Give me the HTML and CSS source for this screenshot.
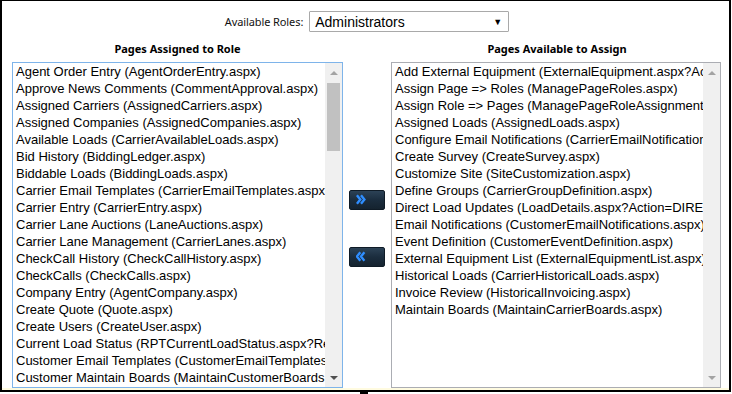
FILE: index.html
```html
<!DOCTYPE html>
<html>
<head>
<meta charset="utf-8">
<link rel="stylesheet" href="styles.css">
</head>
<body>
<div class="frame">
  <div class="roles">
    <label class="roles-label">Available Roles:</label>
    <div class="select">
      <span class="select-text">Administrators</span>
      <span class="select-arrow">&#9660;</span>
    </div>
  </div>
  <div class="columns">
    <div class="col col-left">
      <div class="heading">Pages Assigned to Role</div>
      <div class="listbox listbox-focus">
        <div class="items">
          <div class="item">Agent Order Entry (AgentOrderEntry.aspx)</div>
          <div class="item">Approve News Comments (CommentApproval.aspx)</div>
          <div class="item">Assigned Carriers (AssignedCarriers.aspx)</div>
          <div class="item">Assigned Companies (AssignedCompanies.aspx)</div>
          <div class="item">Available Loads (CarrierAvailableLoads.aspx)</div>
          <div class="item">Bid History (BiddingLedger.aspx)</div>
          <div class="item">Biddable Loads (BiddingLoads.aspx)</div>
          <div class="item">Carrier Email Templates (CarrierEmailTemplates.aspx)</div>
          <div class="item">Carrier Entry (CarrierEntry.aspx)</div>
          <div class="item">Carrier Lane Auctions (LaneAuctions.aspx)</div>
          <div class="item">Carrier Lane Management (CarrierLanes.aspx)</div>
          <div class="item">CheckCall History (CheckCallHistory.aspx)</div>
          <div class="item">CheckCalls (CheckCalls.aspx)</div>
          <div class="item">Company Entry (AgentCompany.aspx)</div>
          <div class="item">Create Quote (Quote.aspx)</div>
          <div class="item">Create Users (CreateUser.aspx)</div>
          <div class="item">Current Load Status (RPTCurrentLoadStatus.aspx?Report=Current)</div>
          <div class="item">Customer Email Templates (CustomerEmailTemplates.aspx)</div>
          <div class="item">Customer Maintain Boards (MaintainCustomerBoards.aspx)</div>
        </div>
        <div class="scrollbar">
          <span class="arrow-up"></span>
          <div class="thumb"></div>
          <span class="arrow-down"></span>
        </div>
      </div>
    </div>
    <div class="mid">
      <button class="move-btn" type="button" aria-label="Add">
        <svg width="10" height="11" viewBox="0 0 10 11"><path d="M0.9 1.3 L4.3 5.5 L0.9 9.7 M5 1.3 L8.4 5.5 L5 9.7" fill="none" stroke="#2f8eff" stroke-width="2.4"/></svg>
      </button>
      <button class="move-btn" type="button" aria-label="Remove">
        <svg width="10" height="11" viewBox="0 0 10 11"><path d="M4.3 1.3 L0.9 5.5 L4.3 9.7 M8.4 1.3 L5 5.5 L8.4 9.7" fill="none" stroke="#2f8eff" stroke-width="2.4"/></svg>
      </button>
    </div>
    <div class="col col-right">
      <div class="heading">Pages Available to Assign</div>
      <div class="listbox">
        <div class="items">
          <div class="item">Add External Equipment (ExternalEquipment.aspx?Action=Add)</div>
          <div class="item">Assign Page =&gt; Roles (ManagePageRoles.aspx)</div>
          <div class="item">Assign Role =&gt; Pages (ManagePageRoleAssignments.aspx)</div>
          <div class="item">Assigned Loads (AssignedLoads.aspx)</div>
          <div class="item">Configure Email Notifications (CarrierEmailNotifications.aspx)</div>
          <div class="item">Create Survey (CreateSurvey.aspx)</div>
          <div class="item">Customize Site (SiteCustomization.aspx)</div>
          <div class="item">Define Groups (CarrierGroupDefinition.aspx)</div>
          <div class="item">Direct Load Updates (LoadDetails.aspx?Action=DIRECT)</div>
          <div class="item">Email Notifications (CustomerEmailNotifications.aspx)</div>
          <div class="item">Event Definition (CustomerEventDefinition.aspx)</div>
          <div class="item">External Equipment List (ExternalEquipmentList.aspx)</div>
          <div class="item">Historical Loads (CarrierHistoricalLoads.aspx)</div>
          <div class="item">Invoice Review (HistoricalInvoicing.aspx)</div>
          <div class="item">Maintain Boards (MaintainCarrierBoards.aspx)</div>
        </div>
        <div class="scrollbar scrollbar-disabled">
          <span class="arrow-up"></span>
          <div class="spacer"></div>
          <span class="arrow-down"></span>
        </div>
      </div>
    </div>
  </div>
  <div class="strip"></div>
</div>
<div class="cursor-mark"></div>
</body>
</html>
```

FILE: styles.css
```css
html, body {
  margin: 0;
  padding: 0;
  background: #fff;
}
body {
  width: 732px;
  height: 394px;
  overflow: hidden;
  font-family: "Noto Sans", "Open Sans", sans-serif;
  color: #000;
}
.frame {
  width: 727px;
  border-style: solid;
  border-color: #000;
  border-width: 1px 2px 2px 2px;
}
.roles {
  display: flex;
  justify-content: center;
  align-items: center;
  gap: 6px;
  padding-top: 10px;
  padding-left: 3px;
  height: 21px;
}
.roles-label {
  font-size: 11px;
  letter-spacing: -0.1px;
  color: #111;
}
.select {
  box-sizing: border-box;
  width: 200px;
  height: 21px;
  border: 1px solid #a9a9a9;
  border-radius: 1px;
  display: flex;
  align-items: center;
  justify-content: space-between;
  padding: 0 6px 0 5px;
  font-family: "Liberation Sans", Arial, sans-serif;
  font-size: 14px;
}
.select-arrow {
  font-size: 9px;
  color: #000;
}
.columns {
  display: flex;
  padding: 0 8px 0 10px;
}
.col-left {
  width: 331px;
}
.col-right {
  width: 330px;
}
.heading {
  font-weight: bold;
  font-size: 11px;
  text-align: center;
  line-height: 14px;
  padding: 10px 0 6px;
}
.col-right .heading {
  padding-left: 2px;
}
.listbox {
  box-sizing: border-box;
  height: 326px;
  border: 1px solid #abadb3;
  display: flex;
  background: #fff;
}
.listbox-focus {
  border-color: #7eb4ea;
}
.items {
  flex: 1;
  min-width: 0;
  overflow: hidden;
  padding: 0 0 0 3px;
  font-family: "Liberation Sans", Arial, sans-serif;
  font-size: 13px;
  line-height: 17px;
}
.item {
  white-space: nowrap;
}
.scrollbar {
  width: 17px;
  background: #f0f0f0;
  display: flex;
  flex-direction: column;
  align-items: center;
}
.arrow-up, .arrow-down {
  display: block;
  width: 0;
  height: 0;
  border-left: 4px solid transparent;
  border-right: 4px solid transparent;
}
.arrow-up {
  margin-top: 8px;
  margin-bottom: 8px;
  border-bottom: 4px solid #a3a3a3;
}
.arrow-down {
  margin-top: auto;
  margin-bottom: 7px;
  border-top: 4px solid #505050;
}
.scrollbar-disabled .arrow-down {
  border-top-color: #a3a3a3;
}
.thumb {
  width: 13px;
  height: 68px;
  background: #c1c1c1;
}
.spacer {
  flex: 1;
}
.mid {
  width: 50px;
  display: flex;
  flex-direction: column;
  align-items: center;
  justify-content: center;
  gap: 37px;
  padding-top: 36px;
  box-sizing: border-box;
}
.move-btn {
  width: 36px;
  height: 20px;
  padding: 0 0 0 6px;
  margin: 0;
  border: 1px solid #0f1b26;
  border-radius: 2px;
  background: linear-gradient(#2c4256, #1b2d3e 50%, #15232f);
  display: flex;
  align-items: center;
  justify-content: flex-start;
}
.move-btn svg {
  display: block;
}
.strip {
  height: 2px;
  background: #fffbe0;
}
.cursor-mark {
  width: 8px;
  height: 2px;
  margin-left: 360px;
  background: #000;
}
```
